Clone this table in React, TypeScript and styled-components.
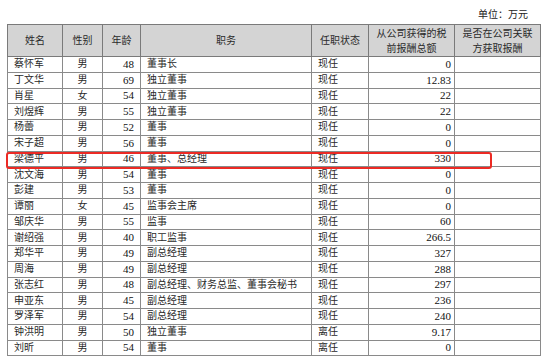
import React from "react";
import styled, { createGlobalStyle } from "styled-components";

const Global = createGlobalStyle`
  html, body { margin: 0; padding: 0; background: #fff; }
  body { font-family: "Liberation Serif", "Noto Sans CJK SC", serif; color: #222; }
`;

const Page = styled.div`
  width: 550px;
  height: 363px;
  padding: 0 10px 0 7px;
  box-sizing: border-box;
  display: flex;
  flex-direction: column;
`;

const Unit = styled.div`
  height: 24px;
  display: flex;
  align-items: center;
  justify-content: flex-end;
  padding-right: 12px;
  padding-top: 2px;
  box-sizing: border-box;
  font-size: 10px;
  color: #222;
`;

const TableWrap = styled.div`
  position: relative;
  width: 533px;
`;

const Table = styled.table`
  width: 533px;
  border-collapse: collapse;
  table-layout: fixed;
  font-size: 10px;
  border: 1px solid #6e6e6e;
`;

const HeadCell = styled.th`
  background: #d4d4d4;
  border: 1px solid #7a7a7a;
  font-weight: normal;
  height: 31px;
  padding: 0;
  line-height: 15px;
  text-align: center;
  vertical-align: middle;
  color: #2a2a2a;
`;

const Cell = styled.td<{ $align?: "left" | "center" | "right"; $pr?: number }>`
  border: 1px solid #8a8a8a;
  height: 15.75px;
  padding: 0 ${(p) => p.$pr ?? 3}px 0 ${(p) => (p.$align === "left" ? 6 : 0)}px;
  text-align: ${(p) => p.$align ?? "left"};
  line-height: 12px;
  white-space: nowrap;
  overflow: visible;
  color: #2a2a2a;
  box-sizing: border-box;
`;

const Num = styled.span`
  font-family: "Liberation Serif", serif;
  font-size: 11px;
  color: #111;
`;

const Highlight = styled.div`
  position: absolute;
  left: -1px;
  top: 128px;
  width: 486px;
  height: 17px;
  border: 2px solid #ec2a24;
  border-radius: 3px;
  pointer-events: none;
  box-sizing: border-box;
`;

type Row = [string, string, number, string, string, string];

const rows: Row[] = [
  ["蔡怀军", "男", 48, "董事长", "现任", "0"],
  ["丁文华", "男", 69, "独立董事", "现任", "12.83"],
  ["肖星", "女", 54, "独立董事", "现任", "22"],
  ["刘煜辉", "男", 55, "独立董事", "现任", "22"],
  ["杨蕾", "男", 52, "董事", "现任", "0"],
  ["宋子超", "男", 56, "董事", "现任", "0"],
  ["梁德平", "男", 46, "董事、总经理", "现任", "330"],
  ["沈文海", "男", 54, "董事", "现任", "0"],
  ["彭建", "男", 53, "董事", "现任", "0"],
  ["谭丽", "女", 45, "监事会主席", "现任", "0"],
  ["邹庆华", "男", 55, "监事", "现任", "60"],
  ["谢绍强", "男", 40, "职工监事", "现任", "266.5"],
  ["郑华平", "男", 49, "副总经理", "现任", "327"],
  ["周海", "男", 49, "副总经理", "现任", "288"],
  ["张志红", "男", 48, "副总经理、财务总监、董事会秘书", "现任", "297"],
  ["申亚东", "男", 45, "副总经理", "现任", "236"],
  ["罗泽军", "男", 54, "副总经理", "现任", "240"],
  ["钟洪明", "男", 50, "独立董事", "离任", "9.17"],
  ["刘昕", "男", 54, "董事", "离任", "0"],
];

export default function App() {
  return (
    <Page>
      <Global />
      <Unit>单位：万元</Unit>
      <TableWrap>
        <Table>
          <colgroup>
            <col style={{ width: 55 }} />
            <col style={{ width: 40 }} />
            <col style={{ width: 38 }} />
            <col style={{ width: 171 }} />
            <col style={{ width: 57 }} />
            <col style={{ width: 86 }} />
            <col style={{ width: 86 }} />
          </colgroup>
          <thead>
            <tr>
              <HeadCell>姓名</HeadCell>
              <HeadCell>性别</HeadCell>
              <HeadCell>年龄</HeadCell>
              <HeadCell>职务</HeadCell>
              <HeadCell>任职状态</HeadCell>
              <HeadCell>
                从公司获得的税
                <br />
                前报酬总额
              </HeadCell>
              <HeadCell>
                是否在公司关联
                <br />
                方获取报酬
              </HeadCell>
            </tr>
          </thead>
          <tbody>
            {rows.map((r) => (
              <tr key={r[0]}>
                <Cell $align="left">{r[0]}</Cell>
                <Cell $align="center" $pr={0}>{r[1]}</Cell>
                <Cell $align="right" $pr={6}>
                  <Num>{r[2]}</Num>
                </Cell>
                <Cell $align="left">{r[3]}</Cell>
                <Cell $align="left">{r[4]}</Cell>
                <Cell $align="right" $pr={3}>
                  <Num>{r[5]}</Num>
                </Cell>
                <Cell $align="left" />
              </tr>
            ))}
          </tbody>
        </Table>
        <Highlight />
      </TableWrap>
    </Page>
  );
}
